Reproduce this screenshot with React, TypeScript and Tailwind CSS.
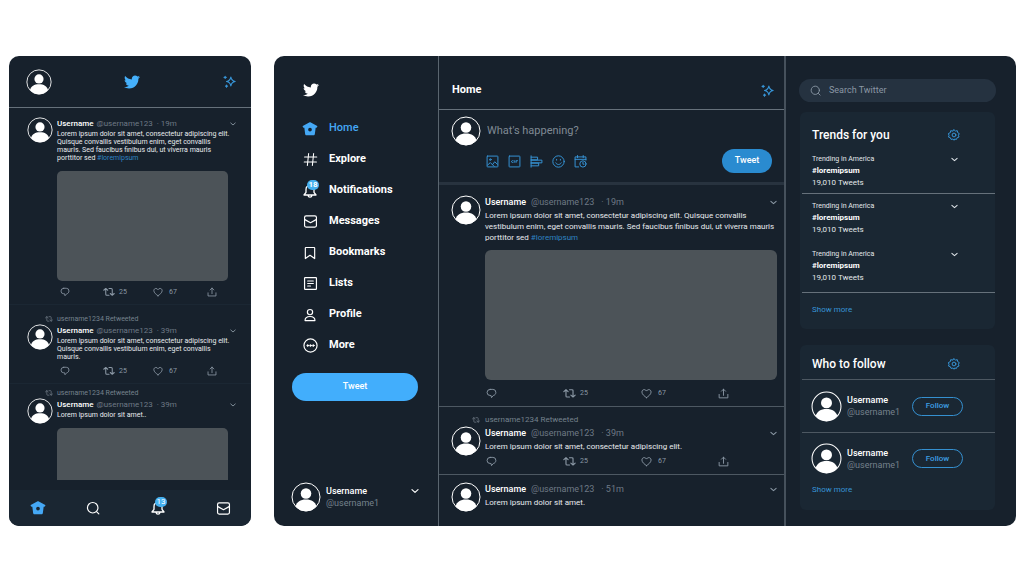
import React from "react";
import clsx from "clsx";
import { FaTwitter } from "react-icons/fa";

type IconProps = { className?: string };

const Stroke = ({
  className = "h-4 w-4",
  width = 2,
  children,
}: IconProps & { width?: number; children: React.ReactNode }) => (
  <svg
    viewBox="0 0 24 24"
    fill="none"
    stroke="currentColor"
    strokeWidth={width}
    strokeLinecap="round"
    strokeLinejoin="round"
    aria-hidden="true"
    className={clsx("shrink-0", className)}
  >
    {children}
  </svg>
);

const HomeIcon = ({ className = "h-4 w-4" }: IconProps) => (
  <svg
    viewBox="0 0 24 24"
    fill="currentColor"
    fillRule="evenodd"
    aria-hidden="true"
    className={clsx("shrink-0", className)}
  >
    <path d="M12 2c.4 0 .8.1 1.2.4l9 4.600c.8.4 1 1 .8 1.800-.2.8-.7 1.200-1.400 1.200H20.500l-1.200 9.600c-.2 1.100-.9 1.900-2 1.900H6.700c-1.100 0-1.800-.8-2-1.900L3.500 10H2.400C1.700 10 1.200 9.600 1 8.800.8 8 1 7.400 1.800 7l9-4.600c.4-.3.8-.4 1.200-.4zM12 10a2.800 2.800 0 1 0 0 5.600 2.800 2.800 0 0 0 0-5.600z" />
  </svg>
);

const HashIcon = ({ className }: IconProps) => (
  <Stroke className={className} width={1.7}>
    <path d="M9 2.5L7 21.5M17 2.5l-2 19M2.5 8h19.5M2 16h19.5" />
  </Stroke>
);

const BellIcon = ({ className }: IconProps) => (
  <Stroke className={className}>
    <path d="M12 4c-3.800 0-6 2.500-6 6v4l-3 4h18l-3-4v-4c0-3.500-2.200-6-6-6zM9 18.500c.3 1.700 1.400 2.700 3 2.700s2.700-1 3-2.700" />
  </Stroke>
);

const MailIcon = ({ className }: IconProps) => (
  <Stroke className={className} width={1.9}>
    <rect x="2.5" y="3" width="19" height="18" rx="2.5" />
    <path d="M3 9l9 5 9-5" />
  </Stroke>
);

const BookmarkIcon = ({ className }: IconProps) => (
  <Stroke className={className}>
    <path d="M5 2.5h14a1 1 0 0 1 1 1v18L12 16l-8 5.5v-18a1 1 0 0 1 1-1z" />
  </Stroke>
);

const ListIcon = ({ className }: IconProps) => (
  <Stroke className={className} width={1.9}>
    <rect x="2.5" y="2.5" width="19" height="19" rx="1" />
    <path d="M7.5 8h9M7.5 12h9M7.5 16h4.5" />
  </Stroke>
);

const UserIcon = ({ className }: IconProps) => (
  <Stroke className={className}>
    <circle cx="12" cy="7" r="4.500" />
    <path d="M3.500 21.500c0-4.500 3-7 8.500-7s8.500 2.500 8.500 7z" />
  </Stroke>
);

const MoreIcon = ({ className }: IconProps) => (
  <Stroke className={className} width={1.9}>
    <circle cx="12" cy="12" r="10.500" />
    <g fill="currentColor" strokeWidth="1.200">
      <circle cx="7.500" cy="12" r="1.400" />
      <circle cx="12" cy="12" r="1.400" />
      <circle cx="16.500" cy="12" r="1.400" />
    </g>
  </Stroke>
);

const SparkleIcon = ({ className }: IconProps) => (
  <Stroke className={className} width={2.100}>
    <path d="M14.500 4c.8 4.600 2.700 7 8 8-5.300 1-7.200 3.400-8 8-.8-4.600-2.700-7-8-8 5.300-1 7.200-3.400 8-8z" />
    <path d="M4 2.500v4M2 4.500h4M6.500 18.500v4M4.500 20.500h4" />
  </Stroke>
);

const SearchIcon = ({ className }: IconProps) => (
  <Stroke className={className}>
    <circle cx="11.500" cy="11.500" r="9" />
    <path d="M18.500 18.500l3.500 3.500" />
  </Stroke>
);

const ChevronIcon = ({ className }: IconProps) => (
  <Stroke className={className} width={3.600}>
    <path d="M3 8l9 8 9-8" />
  </Stroke>
);

const ReplyIcon = ({ className }: IconProps) => (
  <Stroke className={className}>
    <path d="M9 3h6a6.500 6.500 0 0 1 6.500 6.500c0 3.600-2.300 6.300-5.500 6.800l-4 4.700-1-4.700H9A6.500 6.500 0 0 1 9 3z" />
  </Stroke>
);

const RetweetIcon = ({ className }: IconProps) => (
  <Stroke className={className} width={2.100}>
    <path d="M1.500 8.500l4-3.500 4 3.500M5.500 5v11.500c0 1.200.6 2 2 2h4.500M22.500 15l-4 3.500-4-3.500M18.500 18.500V7c0-1.200-.6-2-2-2H12" />
  </Stroke>
);

const HeartIcon = ({ className }: IconProps) => (
  <Stroke className={className}>
    <path d="M12 21C8 18.300 2 13.800 2 8.800c0-3.200 2.200-5.300 5-5.300 2.200 0 4 1.100 5 3.200 1-2.100 2.800-3.200 5-3.200 2.800 0 5 2.100 5 5.300 0 5-6 9.500-10 12.200z" />
  </Stroke>
);

const ShareIcon = ({ className }: IconProps) => (
  <Stroke className={className}>
    <path d="M12 16V2.500M7.500 7l4.500-4.500L16.500 7M2.500 14v7.500h19V14" />
  </Stroke>
);

// eight rounded teeth around the inner ring
const GearIcon = ({ className }: IconProps) => (
  <Stroke className={className}>
    <path d="M12 1.500l2.800 2.600 3.800-.7.700 3.800 3.200 2-1.600 3.300 1.100 3.600-3.600 1.200-1.500 3.500-3.700-.8L12 22.500 9.800 20l-3.700.8-1.500-3.500L1 16.100l1.100-3.600L.5 9.200l4.200-2 .7-3.800 3.800.7z" />
    <circle cx="12" cy="12" r="3.800" />
  </Stroke>
);

const ImageIcon = ({ className }: IconProps) => (
  <Stroke className={className} width={1.800}>
    <rect x="2" y="2" width="20" height="20" rx="1" />
    <circle cx="8" cy="8.500" r="1.500" />
    <path d="M3 18.500l5-4.500 4 4 4-5.500 5 4.500M12 18l3 3" />
  </Stroke>
);

const GifIcon = ({ className }: IconProps) => (
  <Stroke className={className} width={1.800}>
    <rect x="2" y="2" width="20" height="20" rx="1" />
    <path d="M9.500 10.500c-1.800-.5-3 .2-3 1.700s1.400 2.200 3 1.500M12.500 10.500v3M15 13.500v-3h2.500" />
  </Stroke>
);

const PollIcon = ({ className }: IconProps) => (
  <Stroke className={className} width={1.800}>
    <path d="M2 1.500v21M2 4h12v5H2M2 9.500h20v5H2M2 15h14v5H2" />
  </Stroke>
);

const EmojiIcon = ({ className }: IconProps) => (
  <Stroke className={className} width={1.800}>
    <circle cx="12" cy="12" r="10.500" />
    <path d="M7 14.500c1 2 2.800 3 5 3s4-1 5-3M8.500 8v1.500M15.500 8v1.500" />
  </Stroke>
);

const ScheduleIcon = ({ className }: IconProps) => (
  <Stroke className={className} width={1.800}>
    <path d="M6.500 1v4M17 1v4M2 8h20M8.500 22H2V3.500h20v6" />
    <circle cx="16.500" cy="16.500" r="5.800" />
    <path d="M16.500 13.500v3.500h2" />
  </Stroke>
);

const Avatar = ({ className = "h-[30px] w-[30px]" }: IconProps) => (
  <svg viewBox="0 0 30 30" aria-hidden="true" className={clsx("shrink-0", className)}>
    <circle cx="15" cy="15" r="14" fill="none" stroke="#fff" strokeWidth="1" />
    <circle cx="15" cy="11.500" r="5.300" fill="#fff" />
    <path d="M4.500 24.300c1.500-4.600 4.700-6.800 10.500-6.800s9 2.200 10.500 6.800C22.700 27.500 19.200 29.200 15 29.200S7.300 27.500 4.500 24.300z" fill="#fff" />
  </svg>
);

const BellWithBadge = ({ count }: { count: number }) => (
  <span className="relative flex">
    <BellIcon className="h-4 w-4" />
    <span className="absolute -top-[3px] left-[5px] flex h-[10px] w-3 items-center justify-center rounded-full bg-[#45b0f0] text-[8px] leading-none text-white">
      {count}
    </span>
  </span>
);

type Tweet = {
  time: string;
  lines: string;
  tag?: string;
  retweetedBy?: string;
  media?: string;
  actions?: boolean;
};

const feed: Tweet[] = [
  {
    time: "19m",
    lines:
      "Lorem ipsum dolor sit amet, consectetur adipiscing elit. Quisque convallis\nvestibulum enim, eget convallis mauris. Sed faucibus finibus dui, ut viverra mauris\nporttitor sed ",
    tag: "#loremipsum",
    media: "h-[130px] rounded-md",
    actions: true,
  },
  {
    time: "39m",
    lines: "Lorem ipsum dolor sit amet, consectetur adipiscing elit.",
    retweetedBy: "username1234",
    actions: true,
  },
  { time: "51m", lines: "Lorem ipsum dolor sit amet." },
];

const mobileFeed: Tweet[] = [
  {
    time: "19m",
    lines:
      "Lorem ipsum dolor sit amet, consectetur adipiscing elit.\nQuisque convallis vestibulum enim, eget convallis\nmauris. Sed faucibus finibus dui, ut viverra mauris\nporttitor sed ",
    tag: "#loremipsum",
    media: "h-[110px] rounded-[5px]",
    actions: true,
  },
  {
    time: "39m",
    lines:
      "Lorem ipsum dolor sit amet, consectetur adipiscing elit.\nQuisque convallis vestibulum enim, eget convallis\nmauris.",
    retweetedBy: "username1234",
    actions: true,
  },
  {
    time: "39m",
    lines: "Lorem ipsum dolor sit amet..",
    retweetedBy: "username1234",
    media: "h-[52px] rounded-t-[5px]",
  },
];

function Actions({ small, className }: { small?: boolean; className?: string }) {
  const icon = small ? "h-[10px] w-[10px]" : "h-[11px] w-[11px]";
  const wide = small ? "h-3 w-3" : "h-[13px] w-[13px]";
  return (
    <div
      className={clsx(
        "grid h-[14px] items-center text-[7px] text-[#8b98a5]",
        small
          ? "grid-cols-[43px_50px_54px_auto] pl-[3px]"
          : "grid-cols-[77px_78px_77px_auto] pl-px",
        className
      )}
    >
      <button aria-label="Reply" className="flex items-center">
        <ReplyIcon className={icon} />
      </button>
      <button aria-label="Retweet" className="flex items-center gap-1">
        <RetweetIcon className={wide} /> 25
      </button>
      <button aria-label="Like" className="flex items-center gap-[6px]">
        <HeartIcon className={icon} /> 67
      </button>
      <button aria-label="Share" className="flex items-center">
        <ShareIcon className={icon} />
      </button>
    </div>
  );
}

function Retweeted({ by, small }: { by: string; small?: boolean }) {
  return (
    <p
      className={clsx(
        "flex items-center text-[#75818c]",
        small
          ? "h-[10px] gap-1 pl-[18px] text-[7px]"
          : "h-3 gap-[5px] pl-[21px] text-[8px]"
      )}
    >
      <RetweetIcon className="h-2 w-2" /> {by} Retweeted
    </p>
  );
}

function DesktopTweet({ tweet }: { tweet: Tweet }) {
  return (
    <article className="border-b border-[#4d5862] pt-[10px] pr-[7px] pb-[6px] pl-3 last:border-b-0 not-first-of-type:pt-[7px]">
      {tweet.retweetedBy && <Retweeted by={tweet.retweetedBy} />}
      <div className="flex gap-1">
        <Avatar className="h-[30px] w-[30px]" />
        <div className="min-w-0 flex-1">
          <div className="flex h-[15px] items-center text-[9px]">
            <b className="font-medium text-white">Username</b>
            <span className="ml-[5px] text-[#6e7985]">@username123</span>
            <span className="ml-[7px] text-[#6e7985]">· {tweet.time}</span>
            <button aria-label="More options" className="ml-auto text-[#8b98a5]">
              <ChevronIcon className="h-[7px] w-[7px]" />
            </button>
          </div>
          <p className="text-[8px] leading-[11px] whitespace-pre-line text-[#e8ebee]">
            {tweet.lines}
            {tweet.tag && (
              <a href="#" className="text-[#2f83c2]">
                {tweet.tag}
              </a>
            )}
          </p>
          {tweet.media && (
            <div className={clsx("mt-[7px] mb-[6px] bg-[#4c5358]", tweet.media)} />
          )}
          {tweet.actions && <Actions className={tweet.media ? "" : "mt-[2px]"} />}
        </div>
      </div>
    </article>
  );
}

function MobileTweet({ tweet }: { tweet: Tweet }) {
  return (
    <article className="border-b border-[#1b2733] pt-[9px] pb-[5px] pl-[18px] last:border-b-0 last:pt-1">
      {tweet.retweetedBy && <Retweeted by={tweet.retweetedBy} small />}
      <div className="flex gap-1">
        <Avatar className="h-[26px] w-[26px]" />
        <div className="min-w-0 flex-1 pr-[23px]">
          <div className="-mr-2 flex h-[13px] items-center text-[8px]">
            <b className="font-medium text-white">Username</b>
            <span className="ml-[3px] text-[#6e7985]">@username123</span>
            <span className="ml-1 text-[#6e7985]">· {tweet.time}</span>
            <button aria-label="More options" className="ml-auto text-[#8b98a5]">
              <ChevronIcon className="h-[6px] w-[6px]" />
            </button>
          </div>
          <p className="-mr-4 text-[7px] leading-[8px] whitespace-pre-line text-[#e8ebee]">
            {tweet.lines}
            {tweet.tag && (
              <a href="#" className="text-[#2f83c2]">
                {tweet.tag}
              </a>
            )}
          </p>
          {tweet.media && (
            <div className={clsx("mt-[9px] mb-1 bg-[#4c5358]", tweet.media)} />
          )}
          {tweet.actions && <Actions small className={tweet.media ? "" : "mt-[3px]"} />}
        </div>
      </div>
    </article>
  );
}

function Phone() {
  return (
    <section className="flex h-[470px] w-[242px] shrink-0 flex-col overflow-hidden rounded-[10px] bg-[#17212c]">
      <header className="flex h-[52px] shrink-0 items-center justify-between border-b border-[#66717b] pr-[15px] pl-[17px]">
        <Avatar className="h-[26px] w-[26px]" />
        <FaTwitter className="mr-3 h-4 w-4 text-[#45b0fb]" />
        <button aria-label="Top tweets" className="text-[#3794d6]">
          <SparkleIcon className="h-[13px] w-[13px]" />
        </button>
      </header>
      <div className="min-h-0 flex-1 overflow-hidden">
        {mobileFeed.map((tweet, i) => (
          <MobileTweet key={i} tweet={tweet} />
        ))}
      </div>
      <nav className="grid h-9 shrink-0 grid-cols-[56px_64px_66px_auto] items-center bg-[#1a2632] pl-[21px] text-white">
        <a href="#" aria-label="Home" className="text-[#45a8f5]">
          <HomeIcon className="h-4 w-4" />
        </a>
        <a href="#" aria-label="Search">
          <SearchIcon className="h-[14px] w-[14px]" />
        </a>
        <a href="#" aria-label="Notifications">
          <BellWithBadge count={13} />
        </a>
        <a href="#" aria-label="Messages">
          <MailIcon className="h-[15px] w-[15px]" />
        </a>
      </nav>
    </section>
  );
}

const navItems = [
  { text: "Home", icon: <HomeIcon className="h-4 w-4" />, active: true },
  { text: "Explore", icon: <HashIcon className="h-[15px] w-[15px]" /> },
  { text: "Notifications", icon: <BellWithBadge count={18} /> },
  { text: "Messages", icon: <MailIcon className="h-[15px] w-[15px]" /> },
  { text: "Bookmarks", icon: <BookmarkIcon className="h-[14px] w-[14px]" /> },
  { text: "Lists", icon: <ListIcon className="h-[15px] w-[15px]" /> },
  { text: "Profile", icon: <UserIcon className="h-[14px] w-[14px]" /> },
  { text: "More", icon: <MoreIcon className="h-[15px] w-[15px]" /> },
];

function Sidebar() {
  return (
    <div className="flex w-[165px] shrink-0 flex-col border-r border-[#5a656f] pb-[14px] pl-[18px]">
      <a href="#" aria-label="Twitter" className="mt-[26px] ml-[11px] text-white">
        <FaTwitter className="h-4 w-4" />
      </a>
      <nav className="mt-[15px] ml-[10px] flex flex-col">
        {navItems.map(({ text, icon, active }) => (
          <a
            key={text}
            href="#"
            className={clsx(
              "flex h-[31px] items-center gap-[11px] text-[11px]",
              active ? "font-medium text-[#45a8f5]" : "font-bold text-white"
            )}
          >
            <span className="flex w-4 justify-center">{icon}</span>
            {text}
          </a>
        ))}
      </nav>
      <button className="mt-3 mr-5 h-7 rounded-full bg-[#42aefc] text-[9px] font-medium text-white">
        Tweet
      </button>
      <div className="mt-auto flex items-center gap-[5px] pr-[19px]">
        <Avatar className="-ml-px h-[30px] w-[30px]" />
        <div className="text-[9px] leading-3">
          <b className="block font-medium text-white">Username</b>
          <span className="text-[#75818c]">@username1</span>
        </div>
        <button aria-label="Account menu" className="mb-3 ml-auto text-white">
          <ChevronIcon className="h-2 w-2" />
        </button>
      </div>
    </div>
  );
}

const tools = [
  { label: "Add image", Icon: ImageIcon },
  { label: "Add GIF", Icon: GifIcon },
  { label: "Add poll", Icon: PollIcon },
  { label: "Add emoji", Icon: EmojiIcon },
  { label: "Schedule", Icon: ScheduleIcon },
];

function Timeline() {
  return (
    <main className="min-w-0 flex-1 overflow-hidden border-r-2 border-[#46515c]">
      <header className="flex h-[54px] items-center justify-between border-b border-[#66717b] pt-4 pr-[10px] pl-[13px]">
        <h1 className="text-[11px] font-bold text-white">Home</h1>
        <button aria-label="Top tweets" className="text-[#3794d6]">
          <SparkleIcon className="h-[13px] w-[13px]" />
        </button>
      </header>
      <form className="h-[75px] border-b-3 border-[#28333f] pt-[6px] pr-[12px] pl-3">
        <div className="flex items-center gap-[6px]">
          <Avatar className="h-[30px] w-[30px]" />
          <input
            aria-label="Tweet text"
            placeholder="What's happening?"
            className="min-w-0 flex-1 bg-transparent text-[11px] outline-none placeholder:text-[#808a94]"
          />
        </div>
        <div className="mt-[3px] flex items-center gap-[9px] pl-[35px] text-[#3794d6]">
          {tools.map(({ label, Icon }) => (
            <button key={label} type="button" aria-label={label}>
              <Icon className="h-[13px] w-[13px]" />
            </button>
          ))}
          <button
            type="button"
            className="ml-auto h-6 w-[50px] rounded-full bg-[#2a8bd0] text-[9px] font-medium text-white"
          >
            Tweet
          </button>
        </div>
      </form>
      {feed.map((tweet) => (
        <DesktopTweet key={tweet.time} tweet={tweet} />
      ))}
    </main>
  );
}

function Trend({ className }: { className: string }) {
  return (
    <li className={clsx("ml-[2px] flex justify-between pr-[37px] pl-[10px]", className)}>
      <div className="text-[8px] leading-3 text-[#e3e7ea]">
        <p className="text-[7px] leading-3">Trending in America</p>
        <p className="font-bold text-white">#loremipsum</p>
        <p>19,010 Tweets</p>
      </div>
      <button aria-label="Trend options" className="h-3 text-[#dfe4e8]">
        <ChevronIcon className="h-[7px] w-[7px]" />
      </button>
    </li>
  );
}

function Suggestion({ className }: { className: string }) {
  return (
    <li className={clsx("ml-[2px] flex items-center pr-[32px] pl-[9px]", className)}>
      <Avatar className="h-[31px] w-[31px]" />
      <div className="ml-[5px] text-[9px] leading-3">
        <b className="block font-medium text-white">Username</b>
        <span className="text-[#75818c]">@username1</span>
      </div>
      <button className="ml-auto h-[19px] w-[51px] rounded-full border border-[#3590d0] text-[8px] font-medium text-[#3e9fe4]">
        Follow
      </button>
    </li>
  );
}

function CardTitle({ className, children }: { className: string; children: React.ReactNode }) {
  return (
    <div className={clsx("flex items-center justify-between pr-[35px] pl-3", className)}>
      <h2 className="text-[12px] font-medium text-white">{children}</h2>
      <button aria-label="Settings" className="text-[#3794d6]">
        <GearIcon className="h-3 w-3" />
      </button>
    </div>
  );
}

function Widgets() {
  return (
    <aside className="w-[230px] shrink-0 pt-[23px] pr-5 pl-[13px]">
      <label className="flex h-[23px] items-center gap-2 rounded-full bg-[#253240] px-[11px] text-[#8b98a5]">
        <SearchIcon className="h-[11px] w-[11px]" />
        <input
          type="search"
          aria-label="Search Twitter"
          placeholder="Search Twitter"
          className="min-w-0 flex-1 bg-transparent text-[9px] outline-none placeholder:text-[#8b98a5]"
        />
      </label>
      <section className="mx-px mt-[10px] rounded-md bg-[#1a2733]">
        <CardTitle className="h-[35px] pt-[10px]">Trends for you</CardTitle>
        <ul>
          <Trend className="border-b border-[#66717b] pt-[6px] pb-1" />
          <Trend className="pt-[6px] pb-1" />
          <Trend className="border-b border-[#66717b] py-2" />
        </ul>
        <a href="#" className="block pt-[11px] pb-[13px] pl-3 text-[8px] leading-3 text-[#3794d6]">
          Show more
        </a>
      </section>
      <section className="mx-px mt-4 rounded-md bg-[#1a2733]">
        <CardTitle className="h-[34px] pt-1">Who to follow</CardTitle>
        <ul>
          <Suggestion className="h-[54px] border-y border-[#4d5862]" />
          <Suggestion className="h-[51px]" />
        </ul>
        <a href="#" className="block pb-[14px] pl-3 text-[8px] leading-3 text-[#3794d6]">
          Show more
        </a>
      </section>
    </aside>
  );
}

export default function App() {
  return (
    <div className="flex min-h-screen items-start gap-[23px] bg-white pt-14 pr-2 pl-[9px] font-['Roboto',sans-serif]">
      <Phone />
      <div className="flex h-[470px] min-w-0 flex-1 overflow-hidden rounded-[10px] bg-[#17212c]">
        <Sidebar />
        <Timeline />
        <Widgets />
      </div>
    </div>
  );
}
